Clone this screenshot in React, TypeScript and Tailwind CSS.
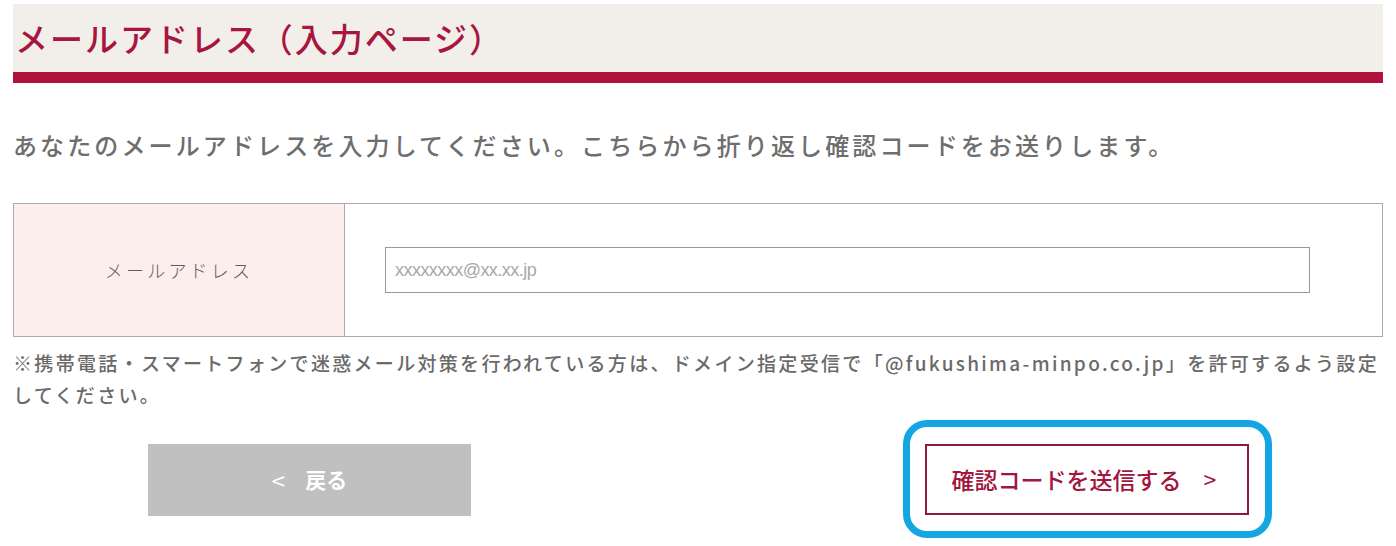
const jp = 'font-["Noto_Sans_CJK_JP","Noto_Sans",sans-serif]';

export default function App() {
  return (
    <div className={`w-[1396px] h-[546px] bg-white px-[13px] pt-[4px] overflow-hidden ${jp}`}>
      <h1 className="h-[79px] bg-[#f2efea] border-b-[11px] border-[#b0123b] flex items-center pl-[2px] pt-[2px] text-[33px] font-medium tracking-[0.06em] text-[#a8153f]">
        メールアドレス（入力ページ）
      </h1>

      <p className="mt-[44px] text-[24px] leading-[36px] font-medium tracking-[0.13em] text-[#6e6e6e]">
        あなたのメールアドレスを入力してください。こちらから折り返し確認コードをお送りします。
      </p>

      <div className="mt-[40px] flex h-[134px] border border-[#ababab]">
        <div className="w-[331px] shrink-0 bg-[#fdeeee] border-r border-[#ababab] flex items-center justify-center text-[18px] font-light tracking-[0.18em] text-[#5e5e5e]">
          メールアドレス
        </div>
        <div className="flex-1 flex items-center pl-[40px] pr-[72px]">
          <input
            type="text"
            placeholder="xxxxxxxx@xx.xx.jp"
            className='w-full h-[46px] border border-[#9a9a9a] px-[9px] text-[18px] tracking-[-0.03em] font-["Liberation_Sans_Narrow","Liberation_Sans",sans-serif] placeholder:text-[#a8a8a8] outline-none'
          />
        </div>
      </div>

      <p className="mt-[10px] text-[19px] leading-[32px] font-medium tracking-[0.122em] text-[#6a6a6a]">
        <span className="whitespace-nowrap">
          ※携帯電話・スマートフォンで迷惑メール対策を行われている方は、ドメイン指定受信で「@fukushima-minpo.co.jp」を許可するよう設定
        </span>
        <br />
        してください。
      </p>

      <div className="mt-[33px] flex items-start">
        <button className="ml-[135px] w-[323px] h-[72px] bg-[#c0c0c0] text-white text-[21px] font-bold flex items-center justify-center gap-[20px]">
          <span className="font-normal text-[24px]">&lt;</span>
          <span>戻る</span>
        </button>

        <div className="relative ml-[454px]">
          <button className="w-[324px] h-[71px] bg-white border-2 border-[#8c1c3c] text-[#a0163d] text-[23px] font-medium flex items-center justify-center gap-[22px] pr-[6px]">
            <span>確認コードを送信する</span>
            <span className="font-normal">&gt;</span>
          </button>
          <div className="absolute -left-[22px] -top-[24px] w-[369px] h-[118px] rounded-[24px] border-[7px] border-[#13a6e2] pointer-events-none" />
        </div>
      </div>
    </div>
  );
}
